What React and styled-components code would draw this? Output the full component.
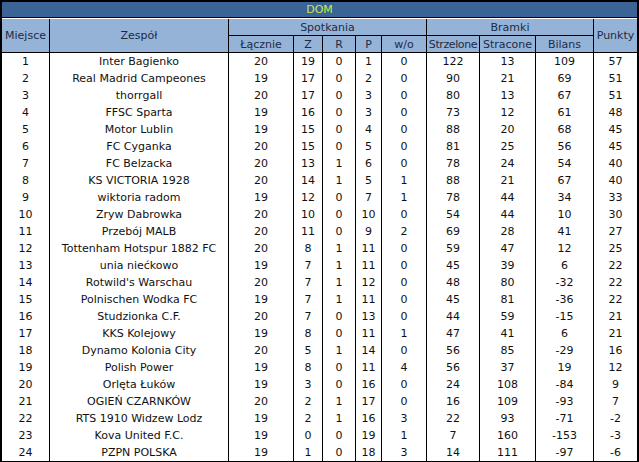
import React from "react";
import styled, { createGlobalStyle } from "styled-components";

const GlobalStyle = createGlobalStyle`
  html, body {
    margin: 0;
    padding: 0;
    background: #ffffff;
  }
`;

const COLS = "48px 179px 65px 29px 33px 26px 45px 53px 56px 58px 43px";

const Board = styled.div`
  width: 639px;
  box-sizing: border-box;
  border: 2px solid #000;

  display: grid;
  grid-template-columns: ${COLS};
  grid-auto-rows: 17px;

  font-family: "DejaVu Sans", sans-serif;
  font-size: 11px;
  color: #111;
`;

const Title = styled.div`
  grid-column: 1 / -1;
  height: 16px;
  box-sizing: border-box;
  border-bottom: 1px solid #000;

  display: flex;
  align-items: center;
  justify-content: center;

  background: #3a6396;
  color: #c8ea4c;
`;

const Head = styled.div`
  grid-column: ${({ $span }) => ($span ? `span ${$span}` : "auto")};
  grid-row: ${({ $rows }) => ($rows ? `span ${$rows}` : "auto")};
  box-sizing: border-box;
  border-bottom: 1px solid #000;
  border-right: ${({ $last }) => ($last ? "none" : "1px solid #000")};

  display: flex;
  align-items: center;
  justify-content: center;
  overflow: hidden;

  background: #95b3d7;
  color: #1c2b46;
  letter-spacing: ${({ $tight }) => ($tight ? "-0.4px" : "normal")};
  white-space: nowrap;
`;

const Cell = styled.div`
  box-sizing: border-box;
  border-right: ${({ $last }) => ($last ? "none" : "1px solid #000")};

  display: flex;
  align-items: center;
  justify-content: center;

  white-space: nowrap;
`;

const rows = [
  ["1", "Inter Bagienko", 20, 19, 0, 1, 0, 122, 13, 109, 57],
  ["2", "Real Madrid Campeones", 19, 17, 0, 2, 0, 90, 21, 69, 51],
  ["3", "thorrgall", 20, 17, 0, 3, 0, 80, 13, 67, 51],
  ["4", "FFSC Sparta", 19, 16, 0, 3, 0, 73, 12, 61, 48],
  ["5", "Motor Lublin", 19, 15, 0, 4, 0, 88, 20, 68, 45],
  ["6", "FC Cyganka", 20, 15, 0, 5, 0, 81, 25, 56, 45],
  ["7", "FC Belzacka", 20, 13, 1, 6, 0, 78, 24, 54, 40],
  ["8", "KS VICTORIA 1928", 20, 14, 1, 5, 1, 88, 21, 67, 40],
  ["9", "wiktoria radom", 19, 12, 0, 7, 1, 78, 44, 34, 33],
  ["10", "Zryw Dabrowka", 20, 10, 0, 10, 0, 54, 44, 10, 30],
  ["11", "Przebój MALB", 20, 11, 0, 9, 2, 69, 28, 41, 27],
  ["12", "Tottenham Hotspur 1882 FC", 20, 8, 1, 11, 0, 59, 47, 12, 25],
  ["13", "unia niećkowo", 19, 7, 1, 11, 0, 45, 39, 6, 22],
  ["14", "Rotwild's Warschau", 20, 7, 1, 12, 0, 48, 80, -32, 22],
  ["15", "Polnischen Wodka FC", 19, 7, 1, 11, 0, 45, 81, -36, 22],
  ["16", "Studzionka C.F.", 20, 7, 0, 13, 0, 44, 59, -15, 21],
  ["17", "KKS Kolejowy", 19, 8, 0, 11, 1, 47, 41, 6, 21],
  ["18", "Dynamo Kolonia City", 20, 5, 1, 14, 0, 56, 85, -29, 16],
  ["19", "Polish Power", 19, 8, 0, 11, 4, 56, 37, 19, 12],
  ["20", "Orlęta Łuków", 19, 3, 0, 16, 0, 24, 108, -84, 9],
  ["21", "OGIEŃ CZARNKÓW", 20, 2, 1, 17, 0, 16, 109, -93, 7],
  ["22", "RTS 1910 Widzew Lodz", 19, 2, 1, 16, 3, 22, 93, -71, -2],
  ["23", "Kova United F.C.", 19, 0, 0, 19, 1, 7, 160, -153, -3],
  ["24", "PZPN POLSKA", 19, 1, 0, 18, 3, 14, 111, -97, -6],
];

const App = () => {
  return (
    <>
      <GlobalStyle />
      <Board>
        <Title>DOM</Title>

        <Head $rows={2}>Miejsce</Head>
        <Head $rows={2}>Zespół</Head>
        <Head $span={5}>Spotkania</Head>
        <Head $span={3}>Bramki</Head>
        <Head $rows={2} $last>
          Punkty
        </Head>
        <Head>Łącznie</Head>
        <Head>Z</Head>
        <Head>R</Head>
        <Head>P</Head>
        <Head>w/o</Head>
        <Head $tight>Strzelone</Head>
        <Head>Stracone</Head>
        <Head>Bilans</Head>

        {rows.map((row) =>
          row.map((value, i) => (
            <Cell key={`${row[0]}-${i}`} $last={i === row.length - 1}>
              {value}
            </Cell>
          ))
        )}
      </Board>
    </>
  );
};

export default App;
